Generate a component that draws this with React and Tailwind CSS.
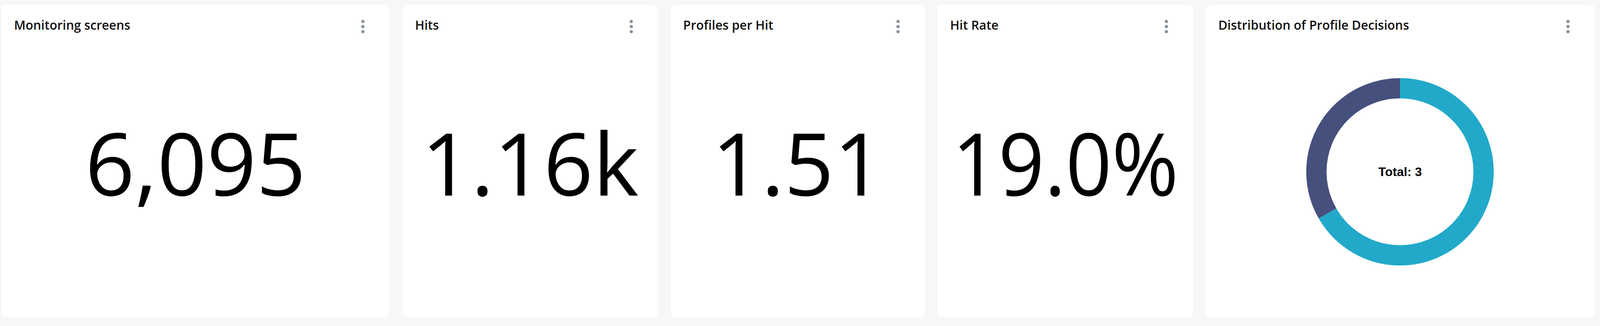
import React from "react";

function Dots() {
  return (
    <svg width="52" height="52" viewBox="0 0 24 24" className="shrink-0">
      <circle cx="12" cy="6" r="2" fill="#8b949c" />
      <circle cx="12" cy="12" r="2" fill="#8b949c" />
      <circle cx="12" cy="18" r="2" fill="#8b949c" />
    </svg>
  );
}

function Card({ title, children }) {
  return (
    <div className="bg-white rounded-[12px] flex flex-col h-[800px] min-w-0 overflow-hidden">
      <div className="flex items-start justify-between pl-[32px] pr-[42px] pt-[30px]">
        <div className="text-[32px] leading-[44px] font-semibold text-[#111] whitespace-nowrap" style={{ fontFamily: '"Open Sans", sans-serif' }}>
          {title}
        </div>
        <Dots />
      </div>
      {children}
    </div>
  );
}

function BigNumber({ value, squeeze }) {
  return (
    <div className="flex-1 flex items-center justify-center pb-[76px]">
      <div
        className={
          squeeze
            ? "text-[222px] leading-none text-black whitespace-nowrap scale-x-[0.93]"
            : "text-[222px] leading-none text-black whitespace-nowrap"
        }
        style={{ fontFamily: '"Open Sans", sans-serif' }}
      >
        {value}
      </div>
    </div>
  );
}

function Donut() {
  const r = 214;
  const c = 2 * Math.PI * r;
  const teal = (c * 2) / 3;
  const dark = c / 3;
  return (
    <div className="flex-1 flex items-center justify-center pb-[26px]">
      <div className="relative w-[480px] h-[480px]">
        <svg width="480" height="480" viewBox="0 0 480 480">
          <g transform="rotate(-90 240 240)">
            <circle cx="240" cy="240" r={r} fill="none" stroke="#22a9c9" strokeWidth="52" strokeDasharray={`${teal} ${c}`} />
            <circle cx="240" cy="240" r={r} fill="none" stroke="#46507d" strokeWidth="52" strokeDasharray={`${dark} ${c}`} strokeDashoffset={-teal} />
          </g>
        </svg>
        <div className="absolute inset-0 flex items-center justify-center">
          <span className="text-[32px] font-bold text-black" style={{ fontFamily: '"Liberation Sans", Arial, sans-serif' }}>
            Total: 3
          </span>
        </div>
      </div>
    </div>
  );
}

export default function App() {
  return (
    <div className="w-full h-screen overflow-hidden bg-[#f7f7f7] pt-[12px] pl-[4px] pr-[14px] pb-[23px]">
      <div className="grid grid-cols-[1011fr_665fr_662fr_665fr_1013fr] gap-x-[33px]">
        <Card title="Monitoring screens">
          <BigNumber value="6,095" />
        </Card>
        <Card title="Hits">
          <BigNumber value="1.16k" />
        </Card>
        <Card title="Profiles per Hit">
          <BigNumber value="1.51" />
        </Card>
        <Card title="Hit Rate">
          <BigNumber value="19.0%" squeeze />
        </Card>
        <Card title="Distribution of Profile Decisions">
          <Donut />
        </Card>
      </div>
    </div>
  );
}
